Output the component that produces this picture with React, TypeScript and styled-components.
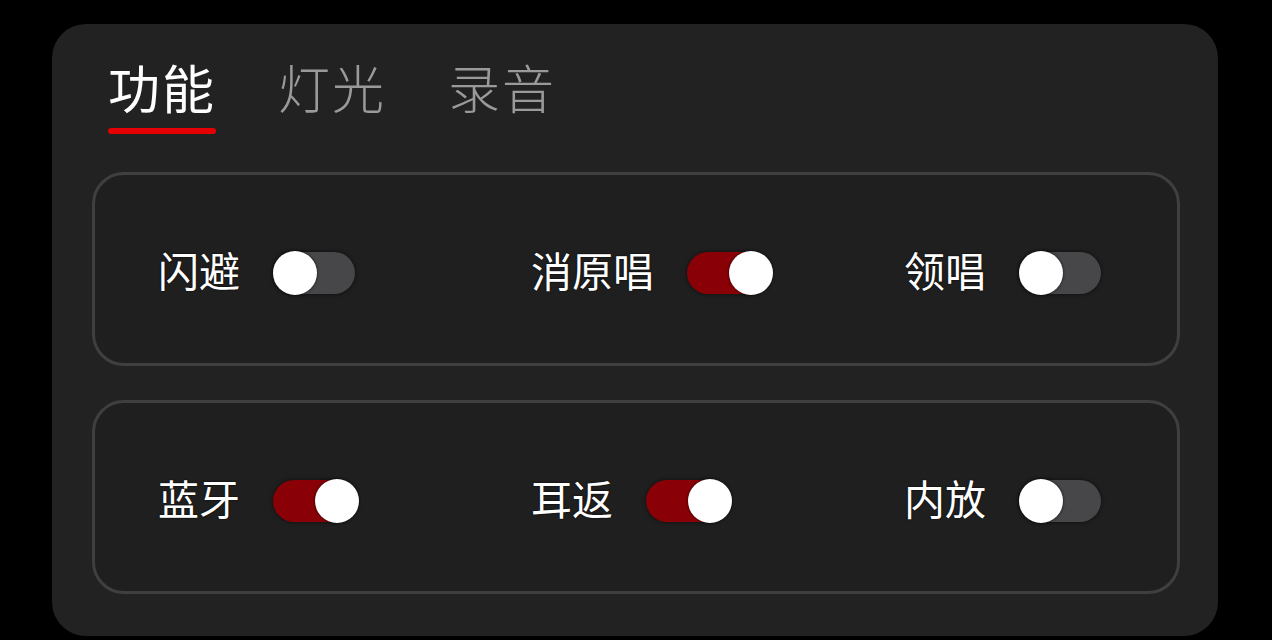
import React, { useState } from "react";
import styled, { createGlobalStyle } from "styled-components";

const Global = createGlobalStyle`
  html, body { margin: 0; padding: 0; background: #000; }
  body { font-family: "Noto Sans CJK SC", "Noto Sans", sans-serif; }
`;

const Page = styled.div`
  width: 1272px;
  height: 640px;
  background: #000;
  padding: 24px 54px 4px 52px;
  box-sizing: border-box;
  overflow: hidden;
`;

const Panel = styled.div`
  height: 612px;
  background: #222222;
  border-radius: 34px;
  padding: 32px 38px 0 40px;
  box-sizing: border-box;
  display: flex;
  flex-direction: column;
`;

const Tabs = styled.div`
  display: flex;
  gap: 62px;
  padding-left: 16px;
  height: 76px;
  margin-bottom: 40px;
`;

const Tab = styled.div<{ $active?: boolean }>`
  position: relative;
  font-size: 52px;
  line-height: 62px;
  letter-spacing: 2px;
  color: ${(p) => (p.$active ? "#ffffff" : "#9a9a9a")};
  font-weight: ${(p) => (p.$active ? 400 : 300)};
  cursor: pointer;
  &::after {
    content: "";
    display: ${(p) => (p.$active ? "block" : "none")};
    position: absolute;
    left: 0;
    right: 0;
    bottom: -2px;
    height: 6px;
    border-radius: 3px;
    background: #e40000;
  }
`;

const Card = styled.div`
  height: 194px;
  border: 3px solid #3f3f40;
  border-radius: 32px;
  box-sizing: border-box;
  display: grid;
  grid-template-columns: repeat(3, 373px);
  align-items: center;
  padding-left: 63px;
  margin-bottom: 34px;
  background: #1f1f1f;
`;

const Item = styled.div`
  display: flex;
  align-items: center;
  gap: 33px;
`;

const Label = styled.span`
  font-size: 41px;
  line-height: 48px;
  color: #ffffff;
  text-shadow: 0 0 2px #000;
`;

const Track = styled.button<{ $on: boolean }>`
  position: relative;
  width: 82px;
  height: 42px;
  margin-top: 8px;
  border: none;
  padding: 0;
  border-radius: 21px;
  background: ${(p) => (p.$on ? "#8a0007" : "#474749")};
  cursor: pointer;
  box-shadow: 0 0 4px rgba(0, 0, 0, 0.6);
`;

const Knob = styled.span<{ $on: boolean }>`
  position: absolute;
  top: -1px;
  left: ${(p) => (p.$on ? "42px" : "0px")};
  width: 44px;
  height: 44px;
  border-radius: 50%;
  background: #ffffff;
  box-shadow: 0 0 3px rgba(0, 0, 0, 0.8);
`;

type Sw = { label: string; on: boolean };

const rows: Sw[][] = [
  [
    { label: "闪避", on: false },
    { label: "消原唱", on: true },
    { label: "领唱", on: false },
  ],
  [
    { label: "蓝牙", on: true },
    { label: "耳返", on: true },
    { label: "内放", on: false },
  ],
];

function Toggle({ initial }: { initial: boolean }) {
  const [on, setOn] = useState(initial);
  return (
    <Track $on={on} onClick={() => setOn(!on)}>
      <Knob $on={on} />
    </Track>
  );
}

export default function App() {
  const [tab, setTab] = useState(0);
  const tabs = ["功能", "灯光", "录音"];
  return (
    <>
      <Global />
      <Page>
        <Panel>
          <Tabs>
            {tabs.map((t, i) => (
              <Tab key={t} $active={i === tab} onClick={() => setTab(i)}>
                {t}
              </Tab>
            ))}
          </Tabs>
          {rows.map((row, ri) => (
            <Card key={ri}>
              {row.map((s) => (
                <Item key={s.label}>
                  <Label>{s.label}</Label>
                  <Toggle initial={s.on} />
                </Item>
              ))}
            </Card>
          ))}
        </Panel>
      </Page>
    </>
  );
}
